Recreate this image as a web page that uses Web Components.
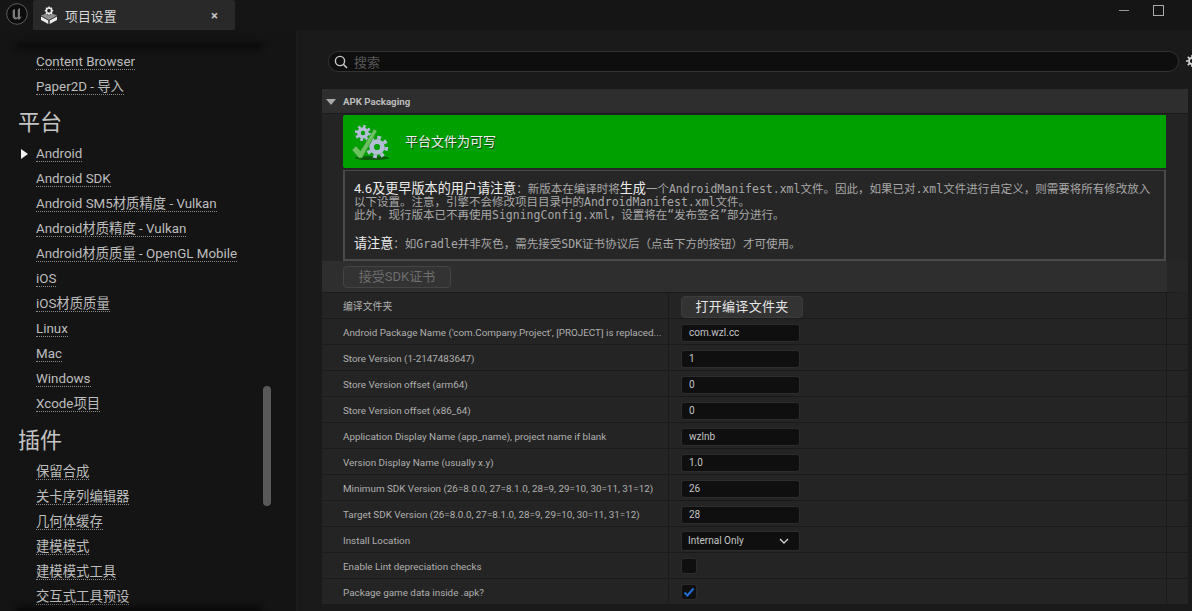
<!DOCTYPE html>
<html lang="zh">
<head>
<meta charset="utf-8">
<title>项目设置</title>
<style>
  html, body {
    margin: 0;
    height: 611px;
    overflow: hidden;
    background: #161616;
    font-family: Roboto, "Noto Sans CJK SC", sans-serif;
    color: #c0c0c0;
  }
  #columns {
    display: grid;
    grid-template-columns: 297px 1fr;
    height: 581px;
  }
</style>
</head>
<body>
<ue-titlebar></ue-titlebar>
<div id="columns">
  <ue-sidebar>
    <side-link>Content Browser</side-link>
    <side-link>Paper2D - 导入</side-link>
    <side-head>平台</side-head>
    <side-link active>Android</side-link>
    <side-link>Android SDK</side-link>
    <side-link>Android SM5材质精度 - Vulkan</side-link>
    <side-link>Android材质精度 - Vulkan</side-link>
    <side-link>Android材质质量 - OpenGL Mobile</side-link>
    <side-link>iOS</side-link>
    <side-link>iOS材质质量</side-link>
    <side-link>Linux</side-link>
    <side-link>Mac</side-link>
    <side-link>Windows</side-link>
    <side-link>Xcode项目</side-link>
    <side-head style="margin-top:7px">插件</side-head>
    <side-link>保留合成</side-link>
    <side-link>关卡序列编辑器</side-link>
    <side-link>几何体缓存</side-link>
    <side-link>建模模式</side-link>
    <side-link>建模模式工具</side-link>
    <side-link>交互式工具预设</side-link>
  </ue-sidebar>
  <ue-details>
    <ue-search></ue-search>
    <ue-section title="APK Packaging">
      <green-banner>平台文件为可写</green-banner>
      <note-box></note-box>
      <sdk-row></sdk-row>
      <prop-row label="编译文件夹"><ue-button>打开编译文件夹</ue-button></prop-row>
      <prop-row label="Android Package Name ('com.Company.Project', [PROJECT] is replaced..."><ue-input>com.wzl.cc</ue-input></prop-row>
      <prop-row label="Store Version (1-2147483647)"><ue-input>1</ue-input></prop-row>
      <prop-row label="Store Version offset (arm64)"><ue-input>0</ue-input></prop-row>
      <prop-row label="Store Version offset (x86_64)"><ue-input>0</ue-input></prop-row>
      <prop-row label="Application Display Name (app_name), project name if blank"><ue-input>wzlnb</ue-input></prop-row>
      <prop-row label="Version Display Name (usually x.y)"><ue-input>1.0</ue-input></prop-row>
      <prop-row label="Minimum SDK Version (26=8.0.0, 27=8.1.0, 28=9, 29=10, 30=11, 31=12)"><ue-input>26</ue-input></prop-row>
      <prop-row label="Target SDK Version (26=8.0.0, 27=8.1.0, 28=9, 29=10, 30=11, 31=12)"><ue-input>28</ue-input></prop-row>
      <prop-row label="Install Location"><ue-select>Internal Only</ue-select></prop-row>
      <prop-row label="Enable Lint depreciation checks"><ue-check></ue-check></prop-row>
      <prop-row label="Package game data inside .apk?"><ue-check checked></ue-check></prop-row>
    </ue-section>
  </ue-details>
</div>

<script>
// each element keeps its markup and styles in its own shadow root
function define(name, html) {
  customElements.define(name, class extends HTMLElement {
    constructor() {
      super();
      this.attachShadow({ mode: "open" }).innerHTML = html;
    }
  });
}

define("ue-titlebar", `
  <style>
    :host { display: flex; height: 30px; background: #151515; position: relative; }
    #logo { width: 22px; height: 22px; margin: 3px 0 0 6px; flex: none; }
    #tab {
      width: 202px; margin-left: 5px; background: #292929; border-radius: 3px 3px 0 0;
      display: flex; align-items: center; box-sizing: border-box; padding: 0 17px 0 7px;
      font-size: 12.8px; color: #d8d8d8;
    }
    #tab svg { width: 18px; height: 18px; margin-right: 7px; flex: none; }
    #tab span { flex: 1; letter-spacing: .1px; }
    #tab b { font-weight: 700; font-size: 13px; color: #c8c8c8; }
    #win { margin-left: auto; display: flex; gap: 24px; align-items: flex-start; padding: 5px 28px 0 0; }
    #min { width: 10px; height: 1px; background: #999; margin-top: 5px; }
    #max { width: 9px; height: 9px; border: 1px solid #aaa; }
  </style>
  <svg id="logo" viewBox="0 0 22 22">
    <circle cx="11" cy="11" r="10.3" fill="#0c0c0c" stroke="#5c5c5c" stroke-width="1"/>
    <path d="M6.5 7.5 L9 5.8 V13 Q9 14.6 10.5 14.6 L11.8 13.8 V6.5 L14 5 V14.2 L15.8 13 Q14.6 16 12.6 17 L11.8 15.4 Q9.8 17 8 16 Q6.5 15 6.7 13 V8.5 Z" fill="#7c7c7c"/>
  </svg>
  <div id="tab">
    <svg viewBox="0 0 18 18">
      <path d="M1 9.5 L6 7.5 L9 9.5 L12 7.5 L17 9.5 L9 14 Z" fill="#8f8f8f"/>
      <path d="M1 10.5 L8.3 14.5 V18 L1 14 Z M17 10.5 L9.7 14.5 V18 L17 14 Z" fill="#ececec"/>
      <circle cx="9" cy="4.7" r="2.7" fill="none" stroke="#ececec" stroke-width="1.7"/>
      <path d="M9 .5V2M9 7.5V9M4.8 4.7H6.3M11.7 4.7H13.2M6 1.7L7 2.7M11 6.7L12 7.7M6 7.7L7 6.7M11 2.7L12 1.7" stroke="#ececec" stroke-width="1.3"/>
    </svg>
    <span>项目设置</span>
    <b>×</b>
  </div>
  <div id="win"><div id="min"></div><div id="max"></div></div>
`);

define("ue-sidebar", `
  <style>
    :host {
      display: block; position: relative; overflow: hidden; height: 581px;
      background: #141414; box-sizing: border-box; padding: 19px 0 0 18px;
    }
    #top, #bottom {
      position: absolute; left: 18px; width: 242px; height: 2px; background: #0b0b0b;
      box-shadow: 0 0 5px 2px #0b0b0b;
    }
    #top { top: 15px; }
    #bottom { top: 578px; }
    #thumb { position: absolute; left: 263px; top: 356px; width: 8px; height: 120px; border-radius: 4px; background: #595959; }
    #edge { position: absolute; right: 0; top: 0; bottom: 0; width: 1px; background: #1c1c1c; }
  </style>
  <slot></slot>
  <div id="top"></div><div id="bottom"></div><div id="thumb"></div><div id="edge"></div>
`);

define("side-link", `
  <style>
    :host { display: block; height: 25px; line-height: 25px; padding-left: 18px; position: relative; font-size: 13.35px; color: #bdbdbd; }
    span { border-bottom: 1px dotted #8a8a8a; padding-bottom: 0; }
    :host([active]) i {
      position: absolute; left: 3px; top: 8px; width: 0; height: 0;
      border-left: 7px solid #f2f2f2; border-top: 5px solid transparent; border-bottom: 5px solid transparent;
    }
  </style>
  <i></i><span><slot></slot></span>
`);

define("side-head", `
  <style>
    :host { display: block; height: 36px; line-height: 36px; margin-top: 6px; font-size: 22px; color: #c4c4c4; }
  </style>
  <slot></slot>
`);

define("ue-details", `
  <style>
    :host { display: block; background: #1a1a1a; height: 581px; overflow: hidden; box-sizing: border-box; padding: 21px 0 0 25px; position: relative; }
    #gear { position: absolute; left: 889px; top: 25px; width: 12px; height: 12px; }
  </style>
  <slot></slot>
  <svg id="gear" viewBox="0 0 12 12">
    <circle cx="6" cy="6" r="3" fill="none" stroke="#cfcfcf" stroke-width="1.8"/>
    <path d="M6 0V2.4M6 9.6V12M0 6H2.4M9.6 6H12M1.8 1.8L3.4 3.4M8.6 8.6L10.2 10.2M1.8 10.2L3.4 8.6M8.6 3.4L10.2 1.8" stroke="#cfcfcf" stroke-width="1.7"/>
  </svg>
`);

define("ue-search", `
  <style>
    :host {
      display: flex; align-items: center; width: 851px; height: 21px; margin: 0 0 0 6px;
      box-sizing: border-box; border: 1px solid #333; border-radius: 11px; background: #0e0e0e;
      padding-left: 5px; font-size: 13px; color: #575757;
    }
    svg { width: 14px; height: 14px; margin-right: 6px; }
  </style>
  <svg viewBox="0 0 14 14"><circle cx="6" cy="6" r="4.6" fill="none" stroke="#c8c8c8" stroke-width="1.4"/><path d="M9.5 9.5L13 13" stroke="#c8c8c8" stroke-width="1.6"/></svg>
  <span>搜索</span>
`);

customElements.define("ue-section", class extends HTMLElement {
  constructor() {
    super();
    const shadow = this.attachShadow({ mode: "open" });
    shadow.innerHTML = `
      <style>
        :host { display: block; width: 866px; margin-top: 17px; background: #242424; }
        header {
          height: 25px; background: #2e2e2e; display: flex; align-items: center; gap: 7px;
          padding-left: 4px; font-size: 9.7px; font-weight: 700; color: #bcbcbc;
          box-shadow: inset 0 -1px 0 #1c1c1c;
        }
        i { width: 0; height: 0; border-top: 6px solid #a8a8a8; border-left: 5.5px solid transparent; border-right: 5.5px solid transparent; }
      </style>
      <header><i></i><span id="t"></span></header>
      <slot></slot>
    `;
    shadow.getElementById("t").textContent = this.getAttribute("title");
  }
});

define("green-banner", `
  <style>
    :host {
      display: flex; align-items: center; height: 53px; box-sizing: border-box; padding-bottom: 2px; margin: 1px 22px 0 21px;
      background: #00a000; border-radius: 2px 0 0 2px; font-size: 13px; color: #f0f0f0;
      text-shadow: 1px 1px 1px #0a3d0a;
    }
    svg { width: 40px; height: 40px; margin: 2px 15px 0 7px; flex: none; }
  </style>
  <svg viewBox="0 0 40 40">
    <ellipse cx="22" cy="36" rx="17" ry="2" fill="#0a5a0a"/>
    <g fill="none" stroke="#b4bdd6">
      <circle cx="13" cy="11" r="4" stroke-width="3.6"/>
      <circle cx="13" cy="11" r="6.6" stroke-width="3" stroke-dasharray="2.6 2.58"/>
      <circle cx="27" cy="25" r="5.4" stroke-width="4.6"/>
      <circle cx="27" cy="25" r="9.4" stroke-width="3.6" stroke-dasharray="3.7 3.68"/>
    </g>
    <path d="M2 28L6 24L10.5 29L24 7L27 9L12 36H9Z" fill="#6cc25f" stroke="#2f8f2f" stroke-width=".6"/>
  </svg>
  <slot></slot>
`);

define("note-box", `
  <style>
    :host {
      display: block; height: 91px; box-sizing: border-box; margin: 2px 22px 0 21px; border: 2px solid #4a4a4a;
      border-top-width: 1px; background: #262626; padding: 11px 0 0 9px;
      font: 11.5px/13.2px "DejaVu Sans Mono", "Noto Sans CJK SC", monospace; color: #a8a8a8; white-space: nowrap;
    }
    b { font-family: Roboto, "Noto Sans CJK SC", sans-serif; font-size: 13.1px; font-weight: 400; color: #ececec; }
    p { margin: 0; }
    .gap { margin-top: 14px; }
  </style>
  <p><b>4.6及更早版本的用户请注意</b>：新版本在编译时将<b>生成</b>一个AndroidManifest.xml文件。因此，如果已对.xml文件进行自定义，则需要将所有修改放入</p>
  <p>以下设置。注意，引擎不会修改项目目录中的AndroidManifest.xml文件。</p>
  <p>此外，现行版本已不再使用SigningConfig.xml，设置将在“发布签名”部分进行。</p>
  <p class="gap"><b>请注意</b>：如Gradle并非灰色，需先接受SDK证书协议后（点击下方的按钮）才可使用。</p>
`);

define("sdk-row", `
  <style>
    :host { display: block; height: 32px; background: #2e2e2e; box-sizing: border-box; padding: 5px 0 0 21px; border-right: 21px solid #262626; border-bottom: 1px solid #1a1a1a; }
    div {
      width: 108px; height: 22px; box-sizing: border-box; border: 1px solid #444; border-radius: 4px;
      background: #333; color: #6e6e6e; font-size: 13px; line-height: 20px; text-align: center;
    }
  </style>
  <div>接受SDK证书</div>
`);

customElements.define("prop-row", class extends HTMLElement {
  constructor() {
    super();
    const shadow = this.attachShadow({ mode: "open" });
    shadow.innerHTML = `
      <style>
        :host {
          display: grid; grid-template-columns: 346px 1fr 21px; height: 26px; box-sizing: border-box;
          border-bottom: 1px solid #1a1a1a; font-size: 9.85px; color: #b0b0b0;
        }
        #name { padding: 2px 0 0 21px; line-height: 24px; white-space: nowrap; }
        #val { border-left: 1px solid #1a1a1a; border-right: 1px solid #1a1a1a; padding: 2px 0 0 12px; }
      </style>
      <div id="name"></div><div id="val"><slot></slot></div><div></div>
    `;
    shadow.getElementById("name").textContent = this.getAttribute("label");
  }
});

define("ue-button", `
  <style>
    :host {
      display: block; width: 122px; height: 22px; margin-top: 1px; box-sizing: border-box; border: 1px solid #3c3c3c; border-radius: 4px;
      background: #333; color: #e6e6e6; font-size: 13px; line-height: 20px; text-align: center; letter-spacing: .3px;
    }
  </style>
  <slot></slot>
`);

define("ue-input", `
  <style>
    :host {
      display: block; width: 119px; height: 18px; margin-top: 3px; box-sizing: border-box; border: 1px solid #2c2c2c; border-radius: 3px;
      background: #0f0f0f; color: #c4c4c4; font-size: 10px; line-height: 16px; padding-left: 7px;
    }
  </style>
  <slot></slot>
`);

define("ue-select", `
  <style>
    :host {
      display: flex; align-items: center; justify-content: space-between; width: 119px; height: 20px; margin-top: 2px;
      box-sizing: border-box; border: 1px solid #2c2c2c; border-radius: 3px; background: #0f0f0f; color: #c4c4c4;
      font-size: 10px; padding: 0 10px 1px 6px;
    }
    svg { width: 10px; height: 6px; }
  </style>
  <slot></slot>
  <svg viewBox="0 0 10 6"><path d="M1 1L5 5L9 1" fill="none" stroke="#d0d0d0" stroke-width="1.4"/></svg>
`);

define("ue-check", `
  <style>
    :host {
      display: block; width: 16px; height: 16px; margin-top: 3px; box-sizing: border-box; border: 1px solid #2c2c2c; border-radius: 3px;
      background: #0f0f0f;
    }
    svg { display: none; width: 14px; height: 14px; }
    :host([checked]) svg { display: block; }
  </style>
  <svg viewBox="0 0 14 14"><path d="M2.5 7.5L5.5 10.5L11.5 3.5" fill="none" stroke="#1f6fd6" stroke-width="2"/></svg>
`);
</script>
</body>
</html>
